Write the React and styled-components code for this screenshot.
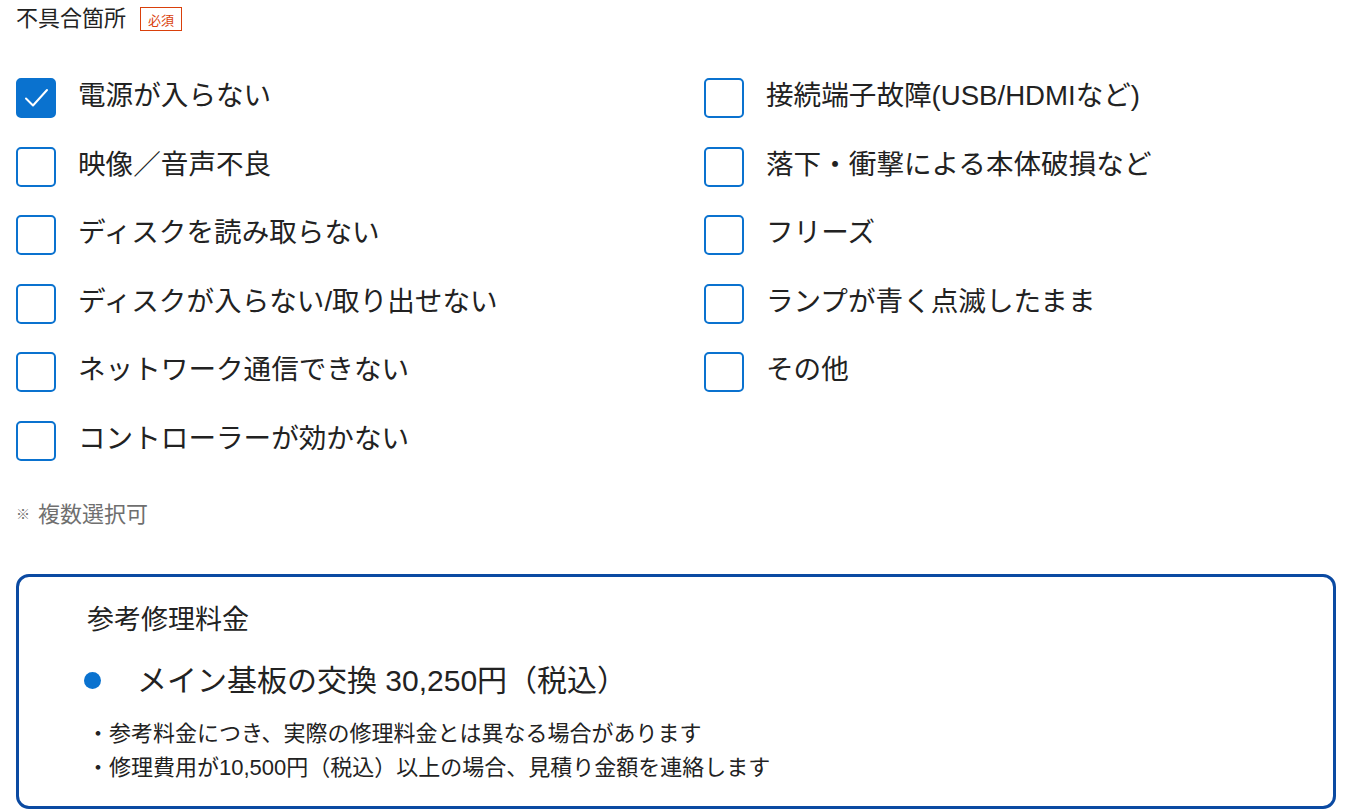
import React, { useState } from "react";
import styled, { createGlobalStyle } from "styled-components";

const GlobalStyle = createGlobalStyle`
	html, body {
		margin: 0;
		padding: 0;
		background: #fff;
	}
	body {
		font-family: "Liberation Sans", "Noto Sans CJK JP", sans-serif;
		color: #222;
	}
`;

const items = [
	"電源が入らない",
	"接続端子故障(USB/HDMIなど)",
	"映像／音声不良",
	"落下・衝撃による本体破損など",
	"ディスクを読み取らない",
	"フリーズ",
	"ディスクが入らない/取り出せない",
	"ランプが青く点滅したまま",
	"ネットワーク通信できない",
	"その他",
	"コントローラーが効かない",
];

const App = () => {
	const [checked, setChecked] = useState({ 0: true });

	const toggle = (i) => setChecked((c) => ({ ...c, [i]: !c[i] }));

	return (
		<Page>
			<GlobalStyle />
			<Header>
				<Label>不具合箇所</Label>
				<Required>必須</Required>
			</Header>

			<Options>
				{items.map((text, i) => (
					<Option key={text} onClick={() => toggle(i)}>
						<Box $checked={!!checked[i]}>
							{checked[i] && (
								<svg width="26" height="26" viewBox="0 0 26 26">
									<path
										d="M3 13.5l7 7L24 5"
										fill="none"
										stroke="#fff"
										strokeWidth="2"
										strokeLinecap="round"
										strokeLinejoin="round"
									/>
								</svg>
							)}
						</Box>
						<OptionText>{text}</OptionText>
					</Option>
				))}
			</Options>

			<Note>
				<span className="mark">※</span>複数選択可
			</Note>

			<PriceCard>
				<CardTitle>参考修理料金</CardTitle>
				<PriceRow>
					<Dot />
					<span>メイン基板の交換 30,250円（税込）</span>
				</PriceRow>
				<Remarks>
					<li>・参考料金につき、実際の修理料金とは異なる場合があります</li>
					<li>・修理費用が10,500円（税込）以上の場合、見積り金額を連絡します</li>
				</Remarks>
			</PriceCard>
		</Page>
	);
};

export default App;

const Page = styled.div`
	padding: 7px 15px 0 16px;
`;

const Header = styled.div`
	display: flex;
	align-items: center;
	gap: 14px;
	height: 24px;
`;

const Label = styled.span`
	font-size: 22px;
	line-height: 24px;
	color: #222;
`;

const Required = styled.span`
	display: inline-flex;
	align-items: center;
	justify-content: center;
	width: 42px;
	height: 24px;
	box-sizing: border-box;
	border: 1px solid #d9400b;
	color: #d9400b;
	font-size: 13px;
`;

const Options = styled.div`
	display: grid;
	grid-template-columns: 688px 1fr;
	row-gap: 28.6px;
	margin-top: 47px;
`;

const Option = styled.label`
	display: flex;
	align-items: center;
	gap: 22px;
	cursor: pointer;
`;

const Box = styled.span`
	flex: none;
	width: 40px;
	height: 40px;
	box-sizing: border-box;
	border-radius: 5px;
	border: 2px solid #0a72cf;
	background: ${(p) => (p.$checked ? "#0a72cf" : "#fff")};
	display: flex;
	align-items: center;
	justify-content: center;
`;

const OptionText = styled.span`
	font-size: 27.6px;
	line-height: 40px;
	color: #222;
	margin-top: -4px;
`;

const Note = styled.div`
	margin-top: 39px;
	font-size: 22px;
	line-height: 28px;
	color: #6f6f6f;

	.mark {
		font-size: 14px;
		margin-right: 8px;
		vertical-align: 3px;
	}
`;

const PriceCard = styled.div`
	margin-top: 45px;
	border: 3px solid #0b4aa2;
	border-radius: 13px;
	padding: 24px 40px 21px 68px;
`;

const CardTitle = styled.div`
	font-size: 27px;
	line-height: 38px;
	color: #222;
`;

const PriceRow = styled.div`
	display: flex;
	align-items: center;
	gap: 36px;
	margin-top: 21px;
	font-size: 30px;
	line-height: 42px;
	color: #222;
`;

const Dot = styled.span`
	flex: none;
	width: 17px;
	height: 17px;
	border-radius: 50%;
	background: #0a72cf;
	margin-left: -3px;
`;

const Remarks = styled.ul`
	list-style: none;
	margin: 15px 0 0;
	padding: 0;
	font-size: 22px;
	line-height: 34px;
	color: #222;
`;
